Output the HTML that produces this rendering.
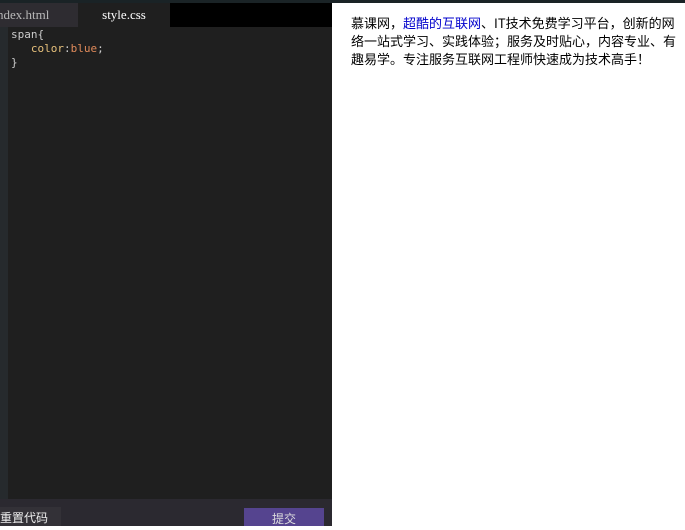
<!DOCTYPE html><html><head><style>
body{margin:0;width:685px;height:526px;overflow:hidden;background:#fff;position:relative;font-family:"Liberation Sans","Noto Sans CJK SC",sans-serif}
.l{position:absolute;left:0;top:0;width:332px;height:526px;background:#1f1f1f}
.top{position:absolute;left:0;top:0;width:685px;height:3px;background:#1a2326}
.tabs{position:absolute;top:3px;left:0;width:332px;height:24px;background:#000}
.t1{position:absolute;left:0;top:0;width:78px;height:24px;background:#2e2c31;color:#b8b8b8;font:13px "Liberation Serif",serif;line-height:24px;text-indent:-3px}
.t2{position:absolute;left:78px;top:0;width:92px;height:24px;background:#1f1f1f;color:#fff;font:13px "Liberation Serif",serif;line-height:24px;text-align:center}
.g{position:absolute;left:0;top:27px;width:8px;height:472px;background:#262a2d}
.code{position:absolute;left:11px;top:28px;font:11px "DejaVu Sans Mono",monospace;line-height:14px;color:#ccc;white-space:pre}
.bot{position:absolute;left:0;top:499px;width:332px;height:27px;background:#2b2930}
.b1{position:absolute;left:0;top:507px;width:61px;height:19px;background:#333137;color:#eee;font-size:12px;line-height:22px}
.b2{position:absolute;left:244px;top:508px;width:80px;height:18px;background:#55448f;color:#ddd;font-size:12px;line-height:22px;text-align:center}
.r{position:absolute;left:351px;top:14px;width:330px;font:13px "WenQuanYi Zen Hei","Noto Sans CJK SC",sans-serif;line-height:18px;color:#000;word-break:break-all}
</style></head><body>
<div class="l"></div><div class="top"></div>
<div class="tabs"><div class="t1">ndex.html</div><div class="t2">style.css</div></div>
<div class="g"></div>
<div class="code">span{
   <span style="color:#e6c07b">color</span>:<span style="color:#e08a5a">blue</span>;
}</div>
<div class="bot"></div>
<div class="b1">重置代码</div><div class="b2">提交</div>
<div class="r">慕课网，<span style="color:#0000cc">超酷的互联网</span>、IT技术免费学习平台，创新的网络一站式学习、实践体验；服务及时贴心，内容专业、有趣易学。专注服务互联网工程师快速成为技术高手！</div>
</body></html>
